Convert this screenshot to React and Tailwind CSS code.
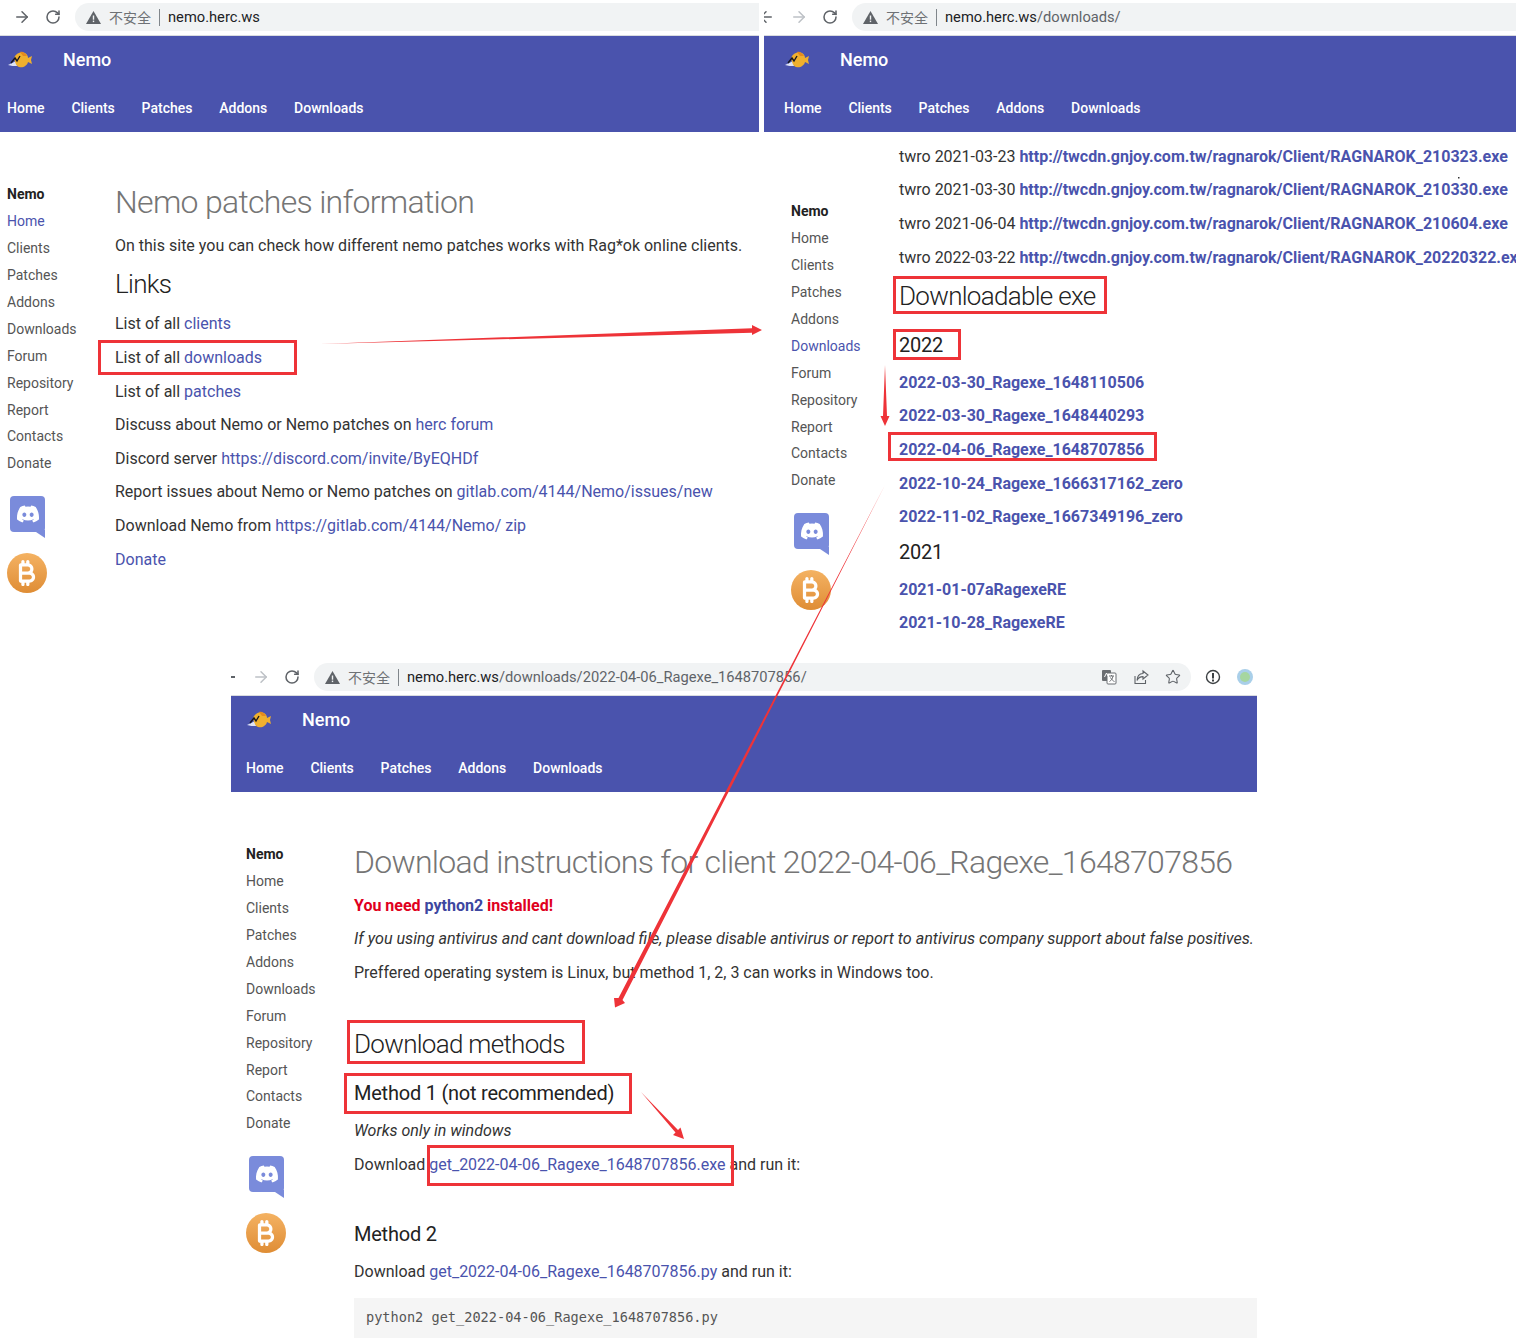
import React from "react";
import { ArrowLeft, ArrowRight, RotateCw, Star } from "lucide-react";
import { FaDiscord } from "react-icons/fa";
import { FaBitcoinSign } from "react-icons/fa6";

const NAV = ["Home", "Clients", "Patches", "Addons", "Downloads"];
const SIDE = ["Home", "Clients", "Patches", "Addons", "Downloads", "Forum", "Repository", "Report", "Contacts", "Donate"];
const link = "text-[#4a53ad]";

const Fish = () => (
  <svg width="24" height="18" viewBox="0 0 24 18">
    <path d="M0 14 C4 12 6 11 8 10 L9 15 C6 15 3 15 0 14Z" fill="#dfe3f5" />
    <path d="M6 7 C8 2 13 0 17 2 C20 4 20 6 20 7 L24 5 L23 9 L24 13 L20 11 C19 15 15 17 11 16 C8 15 7 11 6 7Z" fill="#f0b02e" />
    <path d="M12 1 C15 0 17 2 19 5 L15 5Z" fill="#e58a1e" />
    <path d="M3 12 L7 7 L9 10 L12 5" fill="none" stroke="#15151f" strokeWidth="1.4" />
  </svg>
);

const Warn = () => (
  <svg width="15" height="13" viewBox="0 0 15 13">
    <path d="M7.5 0 L15 13 H0Z" fill="#5f6368" />
    <rect x="6.8" y="4.5" width="1.4" height="4.2" fill="#f1f3f4" />
    <rect x="6.8" y="9.6" width="1.4" height="1.5" fill="#f1f3f4" />
  </svg>
);

const Translate = () => (
  <svg width="16" height="16" viewBox="0 0 16 16">
    <rect x="1" y="1" width="9" height="11" rx="1" fill="#6b6e72" />
    <rect x="6" y="4" width="9" height="11" rx="1" fill="#fff" stroke="#6b6e72" />
    <path d="M8 7 H13 M10.5 6 V7 M12 7 C11.5 10 10 11.5 8.5 12.5 M9.5 8.5 C10.5 10.5 12 12 13.5 12.5" stroke="#6b6e72" fill="none" />
    <path d="M3.5 8 L5.5 4 L7 7" stroke="#fff" fill="none" />
  </svg>
);

const Share = () => (
  <svg width="16" height="16" viewBox="0 0 16 16" fill="none" stroke="#5f6368" strokeWidth="1.1">
    <path d="M2 7 V14.5 H12.5 V11" />
    <path d="M10 2 L15 6 L10 10 V7.6 C7 7.6 5 9 4 11.5 C4.2 7.5 6.5 4.7 10 4.5Z" />
  </svg>
);

const InfoAlert = () => (
  <svg width="16" height="16" viewBox="0 0 16 16">
    <circle cx="8" cy="8" r="6.5" fill="none" stroke="#3c4043" strokeWidth="1.4" />
    <rect x="7" y="4" width="2" height="5.5" fill="#3c4043" />
    <rect x="7" y="10.5" width="2" height="2" fill="#3c4043" />
  </svg>
);

const Chrome = ({ pad, arrow, url, path, tools, leftMark, box = "rounded-l-full" }) => (
  <div className="relative h-[36px] bg-white border-b border-[#dadce0] pt-[3px] flex items-start overflow-hidden">
    {leftMark}
    <div className={`flex items-center h-[28px] shrink-0 ${pad}`}>
      <ArrowRight size={18} strokeWidth={2} className={arrow} />
      <RotateCw size={16} strokeWidth={2.3} className="text-[#5f6368] ml-[14px]" />
    </div>
    <div className={`flex-1 min-w-0 ml-[14px] h-[28px] bg-[#f1f3f4] flex items-center pl-[11px] pr-[10px] ${box}`}>
      <Warn />
      <span className="ml-[8px] text-[14px] text-[#6e7175] font-['Noto_Sans_CJK_SC',sans-serif] whitespace-nowrap">不安全</span>
      <span className="w-px h-[17px] bg-[#80868b] mx-[8px]" />
      <span className="pt-px text-[14.7px] text-[#202124] whitespace-nowrap">{url}<span className="text-[#5f6368]">{path}</span></span>
      {tools}
    </div>
  </div>
);

const Header = ({ pad }) => (
  <div className={`h-[96px] bg-[#4a53ad] text-white ${pad}`}>
    <div className="h-[48px] flex items-center">
      <div className="ml-[1px] w-[24px]"><Fish /></div>
      <span className="ml-[31px] -mt-[2px] text-[18px] font-medium">Nemo</span>
    </div>
    <nav className="h-[48px] flex items-center gap-[26.8px] text-[14px] font-medium">
      {NAV.map((n) => <a key={n}>{n}</a>)}
    </nav>
  </div>
);

const Sidebar = ({ box, active }) => (
  <aside className={`shrink-0 text-[14px] leading-[26.9px] text-[#555] ${box}`}>
    <div className="font-bold text-[#222]">Nemo</div>
    {SIDE.map((s) => (
      <div key={s} className={s === active ? link : ""}>{s}</div>
    ))}
    <div className="relative mt-[19px] ml-[3px] w-[35px] h-[42px]">
      <div className="w-[35px] h-[36px] rounded-[4px] bg-[#7a8bdb] flex items-center justify-center">
        <FaDiscord size={24} className="text-white" />
      </div>
      <svg width="12" height="8" viewBox="0 0 12 8" className="absolute right-0 bottom-0">
        <path d="M0 0 H12 V8Z" fill="#7a8bdb" />
      </svg>
    </div>
    <div className="relative mt-[15px] w-[40px] h-[40px] rounded-full bg-gradient-to-b from-[#f4b262] to-[#df8d34] flex items-center justify-center">
      <FaBitcoinSign size={26} className="text-white" />
    </div>
  </aside>
);

const P = ({ className = "", children }) => (
  <p className={`leading-6 mb-[9.6px] whitespace-nowrap ${className}`}>{children}</p>
);

const H1 = ({ className = "", children }) => (
  <h1 className={`text-[32px] font-light tracking-[-0.7px] text-[#757575] leading-[38px] whitespace-nowrap ${className}`}>{children}</h1>
);

const H2 = ({ className = "", children }) => (
  <h2 className={`text-[26px] font-light tracking-[-0.7px] leading-[34px] text-[#222] whitespace-nowrap ${className}`}>{children}</h2>
);

const H3 = ({ className = "", children }) => (
  <h3 className={`text-[20px] tracking-[-0.23px] leading-[26px] text-[#222] whitespace-nowrap ${className}`}>{children}</h3>
);

const HomeWindow = () => (
  <section className="absolute left-0 top-0 w-[759px] bg-white">
    <Chrome pad="pl-[13px]" arrow="text-[#5f6368]" url="nemo.herc.ws" />
    <Header pad="px-[7px]" />
    <div className="flex">
      <Sidebar box="w-[115px] pl-[7px] pt-[49.3px]" active="Home" />
      <main className="pt-[51px] text-[16px] text-[#333]">
        <H1>Nemo patches information</H1>
        <P className="mt-[13px]">On this site you can check how different nemo patches works with Rag*ok online clients.</P>
        <H2 className="-mt-px mb-[11.8px]">Links</H2>
        <P>List of all <a className={link}>clients</a></P>
        <P>List of all <a className={link}>downloads</a></P>
        <P>List of all <a className={link}>patches</a></P>
        <P>Discuss about Nemo or Nemo patches on <a className={link}>herc forum</a></P>
        <P>Discord server <a className={link}>https://discord.com/invite/ByEQHDf</a></P>
        <P>Report issues about Nemo or Nemo patches on <a className={link}>gitlab.com/4144/Nemo/issues/new</a></P>
        <P>Download Nemo from <a className={link}>https://gitlab.com/4144/Nemo/</a> <a className={link}>zip</a></P>
        <P><a className={link}>Donate</a></P>
      </main>
    </div>
  </section>
);

const TWRO = [
  ["2021-03-23", "RAGNAROK_210323.exe"],
  ["2021-03-30", "RAGNAROK_210330.exe"],
  ["2021-06-04", "RAGNAROK_210604.exe"],
  ["2022-03-22", "RAGNAROK_20220322.exe"],
];
const Y2022 = ["2022-03-30_Ragexe_1648110506", "2022-03-30_Ragexe_1648440293", "2022-04-06_Ragexe_1648707856", "2022-10-24_Ragexe_1666317162_zero", "2022-11-02_Ragexe_1667349196_zero"];
const Y2021 = ["2021-01-07aRagexeRE", "2021-10-28_RagexeRE"];

const DownloadsWindow = () => (
  <section className="absolute left-[764px] top-0 w-[752px] bg-white overflow-hidden">
    <Chrome
      pad="pl-[26px]"
      arrow="text-[#bdc1c6]"
      url="nemo.herc.ws"
      path="/downloads/"
      leftMark={<ArrowLeft size={18} strokeWidth={2} className="absolute -left-[7px] top-[8px] text-[#5f6368]" />}
    />
    <Header pad="px-[20px]" />
    <div className="flex">
      <Sidebar box="w-[135px] pl-[27px] pt-[66.3px]" active="Downloads" />
      <main className="pt-[12.9px] text-[16px] text-[#333]">
        {TWRO.map(([d, f]) => (
          <P key={d}>twro {d} <a className="font-bold text-[#4a53ad]">http://twcdn.gnjoy.com.tw/ragnarok/Client/{f}</a></P>
        ))}
        <H2 className="mt-[2.4px]">Downloadable exe</H2>
        <H3 className="mt-[18.8px] mb-[12.8px]">2022</H3>
        {Y2022.map((f) => <P key={f}><a className="font-bold text-[#4a53ad]">{f}</a></P>)}
        <H3 className="mt-[3.7px] mb-[13px]">2021</H3>
        {Y2021.map((f) => <P key={f}><a className="font-bold text-[#4a53ad]">{f}</a></P>)}
      </main>
    </div>
  </section>
);

const InstructionsWindow = () => (
  <section className="absolute left-[231px] top-[660px] w-[1026px] bg-white">
    <Chrome
      pad="pl-[21px]"
      arrow="text-[#bdc1c6]"
      url="nemo.herc.ws"
      path="/downloads/2022-04-06_Ragexe_1648707856/"
      box="rounded-full mr-[66px]"
      leftMark={<div className="absolute left-0 top-[16px] w-[4px] h-[2px] bg-[#5f6368]" />}
      tools={
        <div className="ml-auto flex items-center gap-[16px]">
          <Translate />
          <Share />
          <Star size={16} strokeWidth={1.6} className="text-[#5f6368]" />
        </div>
      }
    />
    <Header pad="px-[15px]" />
    <div className="flex">
      <Sidebar box="w-[123px] pl-[15px] pt-[49.3px]" />
      <main className="flex-1 min-w-0 pt-[51px] text-[16px] text-[#333]">
        <H1>Download instructions for client 2022-04-06_Ragexe_1648707856</H1>
        <P className="mt-[12.5px] font-bold text-[#e00020]">You need <a className="text-[#3d47a0]">python2</a> installed!</P>
        <P className="italic text-[16.15px]">If you using antivirus and cant download file, please disable antivirus or report to antivirus company support about false positives.</P>
        <P>Preffered operating system is Linux, but method 1, 2, 3 can works in Windows too.</P>
        <H2 className="mt-[42.7px]">Download methods</H2>
        <H3 className="mt-[18.8px]">Method 1 (not recommended)</H3>
        <P className="italic mt-[13px]">Works only in windows</P>
        <P>Download <a className={link}>get_2022-04-06_Ragexe_1648707856.exe</a> and run it:</P>
        <H3 className="mt-[44px] mb-[13px]">Method 2</H3>
        <P>Download <a className={link}>get_2022-04-06_Ragexe_1648707856.py</a> and run it:</P>
        <pre className="mt-[14px] h-[60px] bg-[#f5f5f5] px-[12px] pt-[9px] font-['DejaVu_Sans_Mono',monospace] text-[13.6px] leading-[20px] text-[#555]">python2 get_2022-04-06_Ragexe_1648707856.py</pre>
      </main>
    </div>
  </section>
);

// red annotation boxes drawn over the screenshots
const MARKS = [
  "left-[98px] top-[340px] w-[199px] h-[35px]",
  "left-[893px] top-[276px] w-[214px] h-[38px]",
  "left-[893px] top-[329px] w-[68px] h-[31px]",
  "left-[888px] top-[432px] w-[269px] h-[29px]",
  "left-[347px] top-[1020px] w-[238px] h-[44px]",
  "left-[344px] top-[1073px] w-[288px] h-[41px]",
  "left-[427px] top-[1145px] w-[307px] h-[41px]",
];

const Arrows = () => (
  <svg width="1516" height="1338" viewBox="0 0 1516 1338" className="absolute left-0 top-0 pointer-events-none" fill="#ee3338">
    <polygon points="320,344 752,328.3 752,325 762,330 752,335 752,332.8" />
    <polygon points="885,365 887,416 889.5,416 885,426 880.5,416 883,416" />
    <polygon points="885,485 622.5,1000 625,1003 615,1007.5 614,998 618.5,998" />
    <polygon points="641,1092 678,1130 680.5,1127.5 684,1139 673,1135 675.5,1132.5" />
    <rect x="1458" y="177" width="1.5" height="1.5" fill="#333" />
  </svg>
);

export default function App() {
  return (
    <div className="relative w-[1516px] h-[1338px] overflow-hidden bg-white font-['Roboto',sans-serif]">
      <HomeWindow />
      <DownloadsWindow />
      <InstructionsWindow />
      <div className="absolute left-[1213px] top-[677px] -translate-x-1/2 -translate-y-1/2"><InfoAlert /></div>
      <div className="absolute left-[1237px] top-[669px] w-[16px] h-[16px] rounded-full bg-[#a9cfe9] flex items-center justify-center">
        <div className="w-[10px] h-[10px] rounded-full bg-[#a6d6a0]" />
      </div>
      {MARKS.map((m) => (
        <div key={m} className={`absolute border-[3px] border-[#ee3338] ${m}`} />
      ))}
      <Arrows />
    </div>
  );
}
